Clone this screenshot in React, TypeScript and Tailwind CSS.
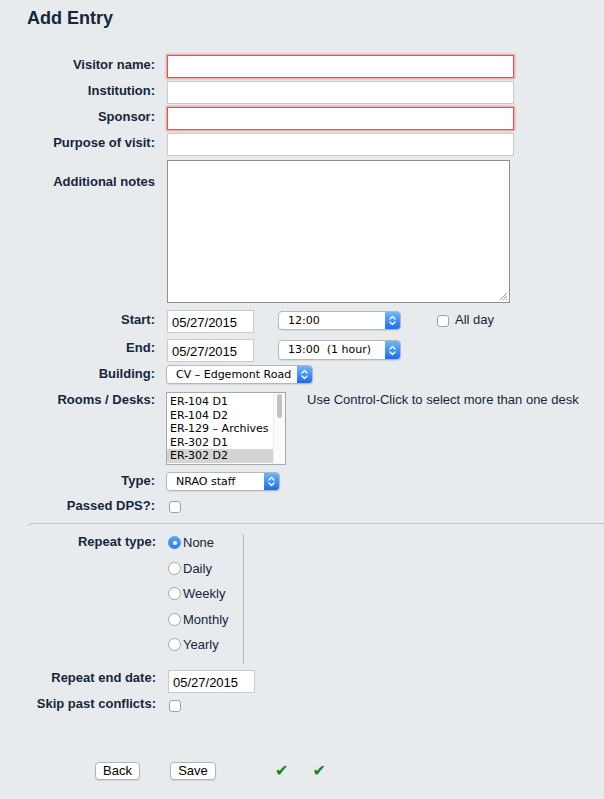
import React from 'react';

const rooms = ['ER-104 D1', 'ER-104 D2', 'ER-129 – Archives', 'ER-302 D1', 'ER-302 D2'];
const repeatTypes = ['None', 'Daily', 'Weekly', 'Monthly', 'Yearly'];

const Chevrons: React.FC = () => (
  <svg width="7" height="11" viewBox="0 0 7 11" fill="none" stroke="white" strokeWidth="1.3" strokeLinecap="round" strokeLinejoin="round">
    <path d="M1 4 L3.5 1.5 L6 4" />
    <path d="M1 7 L3.5 9.5 L6 7" />
  </svg>
);

const MacSelect: React.FC<{ value: string; className: string }> = ({ value, className }) => (
  <div className={`flex rounded-[4px] border border-[#b7b7b7] bg-white shadow-[0_1px_1px_rgba(0,0,0,0.08)] overflow-hidden ${className}`}>
    <div className="flex-1 pl-[9px] text-[11px] leading-[17px] font-['DejaVu_Sans',sans-serif] text-black whitespace-pre">{value}</div>
    <div className="w-[15px] bg-gradient-to-b from-[#70b5fb] to-[#1a6cf0] flex items-center justify-center">
      <Chevrons />
    </div>
  </div>
);

const Checkbox: React.FC<{ className?: string }> = ({ className = '' }) => (
  <div className={`w-[12px] h-[12px] rounded-[3px] border border-[#a2a2a2] bg-white shrink-0 ${className}`} />
);

const Label: React.FC<{ children: React.ReactNode; className?: string }> = ({ children, className = '' }) => (
  <div className={`text-right text-[13px] font-bold shrink-0 ${className}`}>{children}</div>
);

const TextBox: React.FC<{ invalid?: boolean }> = ({ invalid }) => (
  <div
    className={`ml-[12px] w-[347px] h-[23px] bg-white border ${
      invalid ? 'border-[#e5504f] shadow-[0_0_2px_1px_rgba(255,80,80,0.55)]' : 'border-[#cacaca]'
    }`}
  />
);

const DateBox: React.FC<{ className?: string }> = ({ className = '' }) => (
  <div className={`w-[87px] h-[23px] bg-white border border-[#cacaca] pl-[4px] text-[13px] leading-[23px] text-black ${className}`}>
    05/27/2015
  </div>
);

export default function App() {
  return (
    <div className="min-h-[799px] w-full bg-[#e8ebee] text-[#15263d] font-['Liberation_Sans',Arial,sans-serif] pt-[7px] overflow-hidden">
      <h1 className="pl-[27px] text-[18px] leading-[22px] font-bold">Add Entry</h1>

      <div className="mt-[26px]">
        {/* Text fields */}
        <div className="flex items-start h-[26px]">
          <Label className="w-[155px] leading-[20px]">Visitor name:</Label>
          <TextBox invalid />
        </div>
        <div className="flex items-start h-[26px]">
          <Label className="w-[155px] leading-[20px]">Institution:</Label>
          <TextBox />
        </div>
        <div className="flex items-start h-[26px]">
          <Label className="w-[155px] leading-[20px]">Sponsor:</Label>
          <TextBox invalid />
        </div>
        <div className="flex items-start h-[26px]">
          <Label className="w-[155px] leading-[20px]">Purpose of visit:</Label>
          <TextBox />
        </div>

        <div className="flex items-start mt-[1px]">
          <Label className="w-[155px] leading-[16px] pt-[14px]">Additional notes</Label>
          <div className="relative ml-[12px] w-[343px] h-[143px] bg-white border border-[#8f8f8f]">
            <svg className="absolute right-[1px] bottom-[1px]" width="10" height="10" viewBox="0 0 10 10" stroke="#9a9a9a" strokeWidth="1">
              <path d="M9 2 L2 9 M9 5 L5 9 M9 8 L8 9" />
            </svg>
          </div>
        </div>

        {/* Start / End */}
        <div className="flex items-start mt-[7px]">
          <Label className="w-[155px] leading-[16px] pt-[2px]">Start:</Label>
          <DateBox className="ml-[12px]" />
          <MacSelect value="12:00" className="ml-[24px] mt-[1px] w-[123px] h-[19px]" />
          <Checkbox className="ml-[36px] mt-[5px]" />
          <span className="ml-[6px] mt-[2px] text-[13px] leading-[16px]">All day</span>
        </div>
        <div className="flex items-start mt-[6px]">
          <Label className="w-[155px] leading-[16px] pt-[1px]">End:</Label>
          <DateBox className="ml-[12px]" />
          <MacSelect value={'13:00\u00a0\u00a0(1 hour)'} className="ml-[24px] mt-[1px] w-[123px] h-[20px]" />
        </div>

        <div className="flex items-start mt-[3px]">
          <Label className="w-[155px] leading-[16px] pt-[1px]">Building:</Label>
          <MacSelect value="CV – Edgemont Road" className="ml-[11px] w-[147px] h-[19px]" />
        </div>

        {/* Rooms */}
        <div className="flex items-start mt-[8px]">
          <Label className="w-[155px] leading-[16px]">Rooms / Desks:</Label>
          <div className="ml-[11px] w-[120px] h-[73px] border border-[#a9a9a9] bg-white flex">
            <div className="flex-1 pt-[2px]">
              {rooms.map((r, i) => (
                <div
                  key={r}
                  className={`h-[13.5px] pl-[3px] text-[11px] leading-[14px] text-black font-['DejaVu_Sans',sans-serif] whitespace-nowrap ${
                    i === 4 ? 'bg-[#d4d4d4]' : ''
                  }`}
                >
                  {r}
                </div>
              ))}
            </div>
            <div className="w-[12px] border-l border-[#ededed] bg-[#fafafa] pt-[1px] flex justify-center">
              <div className="w-[5px] h-[24px] rounded-full bg-[#c2c2c2]" />
            </div>
          </div>
          <span className="ml-[21px] text-[13px] leading-[16px]">Use Control-Click to select more than one desk</span>
        </div>

        <div className="flex items-start mt-[7px]">
          <Label className="w-[155px] leading-[16px] pt-[1px]">Type:</Label>
          <MacSelect value="NRAO staff" className="ml-[11px] w-[114px] h-[19px]" />
        </div>

        <div className="flex items-start mt-[10px]">
          <Label className="w-[155px] leading-[13px] -mt-[2px]">Passed DPS?:</Label>
          <Checkbox className="ml-[14px]" />
        </div>

        {/* Repeat fieldset */}
        <div className="mt-[10px] ml-[25px] border-t border-l border-t-[#c4c7cb] border-l-transparent rounded-tl-[8px] pt-[10px]">
          <div className="flex items-start">
            <Label className="w-[130px] leading-[16px]">Repeat type:</Label>
            <div className="ml-[12px] w-[76px] h-[130px] border-r border-[#b9b9b9] pt-[2px]">
              {repeatTypes.map((t, i) => (
                <div key={t} className="flex items-start h-[25.5px]">
                  {i === 0 ? (
                    <div className="w-[13px] h-[13px] rounded-full bg-gradient-to-b from-[#5aa6f8] to-[#2a7cf0] flex items-center justify-center shrink-0">
                      <div className="w-[4px] h-[4px] rounded-full bg-white" />
                    </div>
                  ) : (
                    <div className="w-[13px] h-[13px] rounded-full border border-[#a5a5a5] bg-white shrink-0" />
                  )}
                  <span className="ml-[2px] text-[13px] leading-[14px]">{t}</span>
                </div>
              ))}
            </div>
          </div>

          <div className="flex items-start mt-[6px]">
            <Label className="w-[130px] leading-[16px]">Repeat end date:</Label>
            <DateBox className="ml-[12px]" />
          </div>

          <div className="flex items-start mt-[7px]">
            <Label className="w-[130px] leading-[13px] -mt-[3px]">Skip past conflicts:</Label>
            <Checkbox className="ml-[13px]" />
          </div>
        </div>

        {/* Buttons */}
        <div className="flex items-center mt-[50px] pl-[95px]">
          <button className="w-[45px] h-[18px] rounded-[4px] border border-[#b3b3b3] bg-white text-[13px] leading-[16px] text-black shadow-[0_1px_1px_rgba(0,0,0,0.1)]">
            Back
          </button>
          <button className="ml-[30px] w-[46px] h-[18px] rounded-[4px] border border-[#b3b3b3] bg-white text-[13px] leading-[16px] text-black shadow-[0_1px_1px_rgba(0,0,0,0.1)]">
            Save
          </button>
          <span className="ml-[59px] text-[16px] leading-[16px] text-[#1c841c] font-['DejaVu_Sans',sans-serif]">✔</span>
          <span className="ml-[24px] text-[16px] leading-[16px] text-[#1c841c] font-['DejaVu_Sans',sans-serif]">✔</span>
        </div>
      </div>
    </div>
  );
}
